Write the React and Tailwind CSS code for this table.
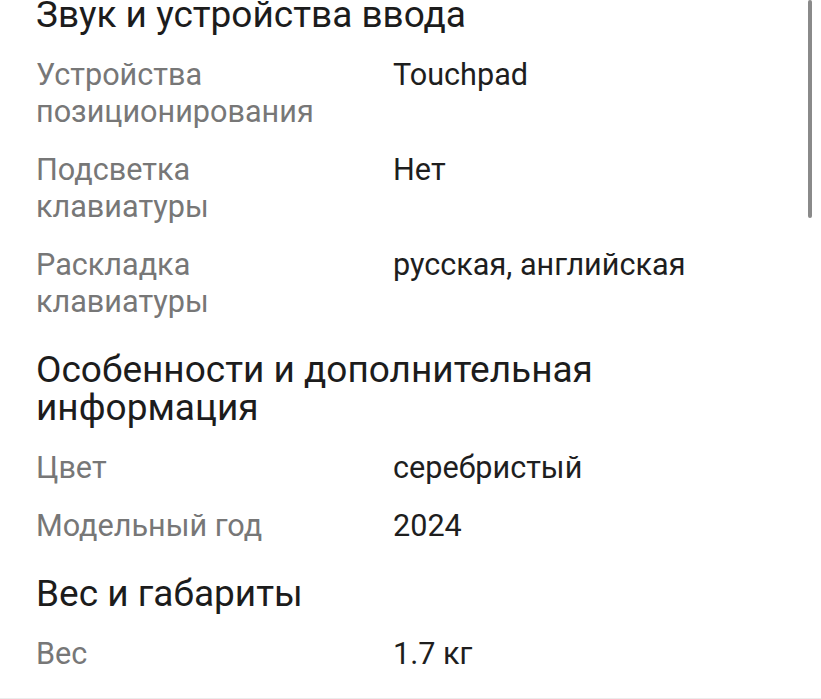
const sections = [
  {
    title: "Звук и устройства ввода",
    rows: [
      ["Устройства позиционирования", "Touchpad"],
      ["Подсветка клавиатуры", "Нет"],
      ["Раскладка клавиатуры", "русская, английская"],
    ],
  },
  {
    title: "Особенности и дополнительная информация",
    rows: [
      ["Цвет", "серебристый"],
      ["Модельный год", "2024"],
    ],
  },
  {
    title: "Вес и габариты",
    rows: [["Вес", "1.7 кг"]],
  },
];

function Section({ title, rows }) {
  return (
    <section className="pb-[31px]">
      <h2 className="text-[37px] leading-[38px] text-[#1c1c1c] pr-[180px] mb-[22px]">{title}</h2>
      <div className="flex flex-col gap-[21px]">
        {rows.map(([label, value]) => (
          <div key={label} className="grid grid-cols-[357px_1fr] text-[30.6px] leading-[37px]">
            <span className="text-[#777777] pr-[40px]">{label}</span>
            <span className="text-[#1e1e1e]">{value}</span>
          </div>
        ))}
      </div>
    </section>
  );
}

export default function App() {
  return (
    <div
      className="relative h-[699px] w-[821px] overflow-hidden bg-white border-b border-[#ececec]"
      style={{ fontFamily: "Roboto, 'Noto Sans', sans-serif" }}
    >
      <div className="mt-[-4px] pl-[36px]">
        {sections.map((s) => (
          <Section key={s.title} {...s} />
        ))}
      </div>
      <div className="absolute right-[9px] top-0 h-[218px] w-[4px] rounded-full bg-[#8a8a8a]" />
    </div>
  );
}
